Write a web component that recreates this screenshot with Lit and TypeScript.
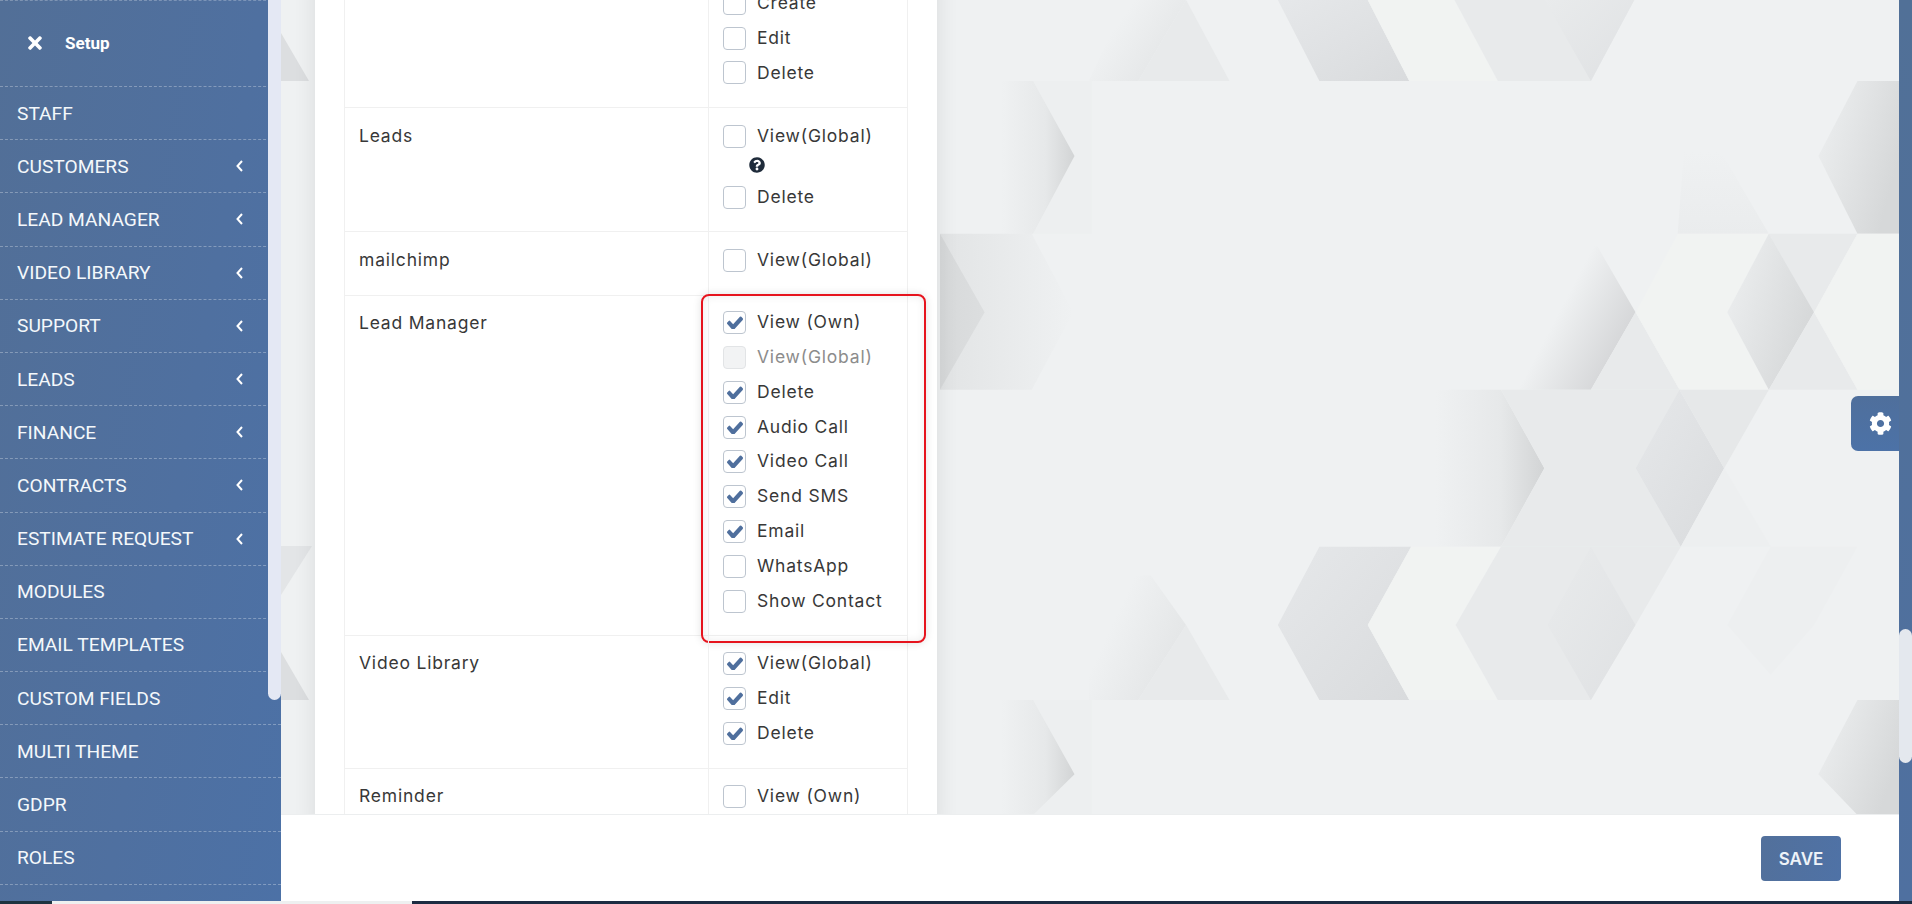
import { LitElement, html, css, svg } from "lit";
import { customElement } from "lit/decorators.js";

const CHECK = "M1671 566q0 40-28 68l-724 724-136 136q-28 28-68 28t-68-28l-136-136-362-362q-28-28-28-68t28-68l136-136q28-28 68-28t68 28l294 295 656-657q28-28 68-28t68 28l136 136q28 28 28 68z";
const TIMES = "M242.72 256l100.07-100.07c12.28-12.28 12.28-32.19 0-44.48l-22.24-22.24c-12.28-12.28-32.19-12.28-44.48 0L176 189.28 75.93 89.21c-12.28-12.28-32.19-12.28-44.48 0L9.21 111.45c-12.28 12.28-12.28 32.19 0 44.48L109.28 256 9.21 356.07c-12.28 12.28-12.28 32.19 0 44.48l22.24 22.24c12.28 12.28 32.2 12.28 44.48 0L176 322.72l100.07 100.07c12.28 12.28 32.2 12.28 44.48 0l22.24-22.24c12.28-12.28 12.28-32.19 0-44.48L242.72 256z";
const COG = "M487.4 315.7l-42.6-24.6c4.3-23.2 4.3-47 0-70.2l42.6-24.6c4.9-2.8 7.1-8.6 5.5-14-11.1-35.6-30-67.8-54.7-94.6-3.8-4.1-10-5.1-14.8-2.3L380.8 110c-17.9-15.4-38.5-27.3-60.8-35.1V25.8c0-5.6-3.9-10.5-9.4-11.7-36.7-8.2-74.3-7.8-109.2 0-5.5 1.2-9.4 6.1-9.4 11.7V75c-22.2 7.9-42.8 19.8-60.8 35.1L88.7 85.5c-4.9-2.8-11-1.9-14.8 2.3-24.7 26.7-43.6 58.9-54.7 94.6-1.7 5.4.6 11.2 5.5 14L67.3 221c-4.3 23.2-4.3 47 0 70.2l-42.6 24.6c-4.9 2.8-7.1 8.6-5.5 14 11.1 35.6 30 67.8 54.7 94.6 3.8 4.1 10 5.1 14.8 2.3l42.6-24.6c17.9 15.4 38.5 27.3 60.8 35.1v49.2c0 5.6 3.9 10.5 9.4 11.7 36.7 8.2 74.3 7.8 109.2 0 5.5-1.2 9.4-6.1 9.4-11.7v-49.2c22.2-7.9 42.8-19.8 60.8-35.1l42.6 24.6c4.9 2.8 11 1.9 14.8-2.3 24.7-26.7 43.6-58.9 54.7-94.6 1.5-5.5-.7-11.3-5.6-14.1zM256 336c-44.1 0-80-35.9-80-80s35.9-80 80-80 80 35.9 80 80-35.9 80-80 80z";
const QUESTION = "M504 256c0 136.997-111.043 248-248 248S8 392.997 8 256C8 119.083 119.043 8 256 8s248 111.083 248 248zM262.655 90c-54.497 0-89.255 22.957-116.549 63.758-3.536 5.286-2.353 12.415 2.715 16.258l34.699 26.31c5.205 3.947 12.621 3.008 16.665-2.122 17.864-22.658 30.113-35.797 57.303-35.797 20.429 0 45.698 13.148 45.698 32.958 0 14.976-12.363 22.667-32.534 33.976C247.128 238.528 216 254.941 216 296v4c0 6.627 5.373 12 12 12h56c6.627 0 12-5.373 12-12v-1.333c0-28.462 83.186-29.647 83.186-106.667 0-58.002-60.165-102-116.531-102zM256 338c-25.365 0-46 20.635-46 46 0 25.364 20.635 46 46 46s46-20.636 46-46c0-25.365-20.635-46-46-46z";

const NAV: [string, boolean][] = [
  ["STAFF", false], ["CUSTOMERS", true], ["LEAD MANAGER", true], ["VIDEO LIBRARY", true],
  ["SUPPORT", true], ["LEADS", true], ["FINANCE", true], ["CONTRACTS", true],
  ["ESTIMATE REQUEST", true], ["MODULES", false], ["EMAIL TEMPLATES", false],
  ["CUSTOM FIELDS", false], ["MULTI THEME", false], ["GDPR", false], ["ROLES", false],
];

type Item = { t: string; c?: boolean; d?: boolean; help?: boolean };
type Row = { label: string; items: Item[]; boxed?: boolean };
const ROWS: Row[] = [
  { label: "", items: [{ t: "Create" }, { t: "Edit" }, { t: "Delete" }] },
  { label: "Leads", items: [{ t: "View(Global)" }, { t: "", help: true }, { t: "Delete" }] },
  { label: "mailchimp", items: [{ t: "View(Global)" }] },
  {
    label: "Lead Manager", boxed: true,
    items: [
      { t: "View (Own)", c: true }, { t: "View(Global)", d: true }, { t: "Delete", c: true },
      { t: "Audio Call", c: true }, { t: "Video Call", c: true }, { t: "Send SMS", c: true },
      { t: "Email", c: true }, { t: "WhatsApp" }, { t: "Show Contact" },
    ],
  },
  { label: "Video Library", items: [{ t: "View(Global)", c: true }, { t: "Edit", c: true }, { t: "Delete", c: true }] },
  { label: "Reminder", items: [{ t: "View (Own)" }] },
];

// Background facets, authored in a 1547x1558 space covering x 940-1899, y 0-815.
const BASE = "#eff1f2", LIGHT = "#f1f3f2", MID = "#e8eaeb", SOFT = "#edeff0";
const FACETS: [string, string][] = [
  // row 0
  ["240,155 320,155 397,0 300,0", "url(#fr)"],
  ["320,155 467,155 397,0", MID],
  ["545,0 612,155 757,155 690,0", "url(#dk)"],
  ["690,0 757,155 900,155 830,0", LIGHT],
  ["830,0 900,155 1050,155 1120,0", MID],
  ["975,0 1050,155 1120,0", "url(#dl)"],
  // row 1
  ["150,155 245,155 245,447 150,447 217,298", SOFT],
  ["60,155 150,155 217,298 150,447 60,447", "url(#fr2)"],
  ["1480,155 1547,155 1547,447 1480,447 1417,298", "url(#fr3)"],
  ["1190,447 1337,447 1260,290 1200,290", "url(#fv)"],
  // row 2
  ["0,447 148,447 215,597 148,745 0,745", "url(#fl)"],
  ["0,447 72,597 0,745", "url(#fk)"],
  ["900,745 1050,745 1122,597 1060,470 930,470", "url(#fd)"],
  ["1122,597 1050,745 1193,745", MID],
  ["1190,447 1337,447 1270,597 1337,745 1193,745 1122,597", LIGHT],
  ["1337,447 1480,447 1410,597", MID],
  ["1337,447 1410,597 1337,745 1270,597", "url(#fr3)"],
  ["1410,597 1337,745 1480,745", MID],
  ["1480,447 1547,447 1547,745 1480,745 1410,597", LIGHT],
  // row 3
  ["740,745 905,745 975,895 905,1045 740,1045", "url(#fr2)"],
  ["905,745 1195,745 1122,895 1195,1045 905,1045 975,895", MID],
  ["1193,745 1265,895 1195,1045 1122,895", "url(#dk)"],
  ["1193,745 1337,745 1265,895", "#e6e8e9"],
  ["1265,895 1195,1045 1340,1045", SOFT],
  // row 4
  ["612,1045 760,1045 690,1195 757,1338 612,1338 545,1195", "url(#dk)"],
  ["760,1045 905,1045 832,1195 900,1338 757,1338 690,1195", LIGHT],
  ["905,1045 1195,1045 1122,1195 1050,1338 900,1338 832,1195", MID],
  ["1050,1045 1122,1195 1050,1338 980,1195", "url(#dl)"],
  ["240,1338 320,1338 397,1195 340,1100 240,1100", "url(#fr)"],
  ["320,1338 467,1338 397,1195", MID],
  ["1340,1045 1480,1045 1410,1195 1340,1290 1270,1195", SOFT],
  // row 5
  ["150,1338 245,1338 245,1558 150,1558 217,1480", SOFT],
  ["60,1338 150,1338 217,1480 150,1558 60,1558", "url(#fr2)"],
  ["1480,1338 1547,1338 1547,1558 1480,1558 1417,1480", "url(#fr3)"],
];

@customElement("app-root")
export class AppRoot extends LitElement {
  static styles = css`
    :host { display: block; width: 1912px; height: 904px; overflow: hidden; font-family: "Inter", "Noto Sans", sans-serif; }
    .app { display: grid; grid-template-columns: 281px 1fr 13px; height: 901px; }
    .taskbar { display: flex; height: 3px; background: #1d3440; }
    .taskbar i { display: block; }
    .tb-a { width: 52px; }
    .tb-b { width: 360px; background: #eef0f0; }
    .tb-c { flex: 1; background: #1c2c42; }

    .side { position: relative; overflow: hidden; background: linear-gradient(100deg, #526f97 0%, #4f70a0 60%, #4c71a6 100%); font-family: "Roboto", sans-serif; color: #fff; }
    .head { display: flex; align-items: center; padding: 0 0 2px 28px; border-top: 1px dashed rgba(255,255,255,.25); border-bottom: 1px dashed rgba(255,255,255,.3); box-sizing: border-box; height: 87px; font-weight: 700; font-size: 17px; }
    .head svg { width: 14px; height: 20px; fill: #fff; margin-right: 23px; }
    .nav { display: flex; align-items: center; justify-content: space-between; height: 53.2px; box-sizing: border-box; padding: 0 38px 0 17px; border-bottom: 1px dashed rgba(255,255,255,.3); font-size: 19.2px; font-weight: 400; color: #f4f8fb; }
    .nav svg { width: 7px; height: 12px; fill: none; stroke: #fff; stroke-width: 2; }
    .thumb { position: absolute; right: 0; top: -6px; width: 13px; height: 706px; border-radius: 7px; background: #e4e8f4; }

    .main { position: relative; display: flex; flex-direction: column; min-width: 0; background: #fff; }
    .bg { position: absolute; left: 0; top: 0; width: 1618px; height: 815px; }
    .scroller { position: relative; height: 815px; overflow: hidden; padding-left: 34px; box-sizing: border-box; flex: none; }
    .card { width: 622px; margin-top: -24.5px; background: #fff; box-shadow: 0 0 22px rgba(0,0,0,.09); padding: 0 29px; box-sizing: border-box; color: #383838; font-size: 17.5px; letter-spacing: .8px; }
    .row { display: grid; grid-template-columns: 363px 1fr; border-bottom: 1px solid #f0f0f0; border-left: 1px solid #f0f0f0; border-right: 1px solid #f0f0f0; }
    .label { padding: 10.5px 0 0 14px; line-height: 34.8px; }
    .cell { position: relative; border-left: 1px solid #f0f0f0; padding: 10.5px 0 17px 14px; }
    .cell.boxed { padding: 9.5px 0 16.5px 14px; }
    .box { position: absolute; left: -8px; top: -2px; width: 225px; height: 349px; box-sizing: border-box; border: 2px solid #e6141e; border-radius: 8px; box-shadow: 0 0 8px rgba(0,0,0,.12), inset 0 0 8px rgba(0,0,0,.08); pointer-events: none; }
    .item { display: flex; align-items: center; height: 34.8px; line-height: 34.8px; white-space: nowrap; }
    .help { height: 26px; padding: 0 0 4px 26px; box-sizing: border-box; display: flex; align-items: center; }
    .help svg { width: 16px; height: 16px; fill: #1f2b3a; }
    .cb { flex: none; width: 23px; height: 23px; box-sizing: border-box; border: 1px solid #bdc5cf; border-radius: 4px; background: #fff; margin-right: 11px; display: flex; align-items: center; justify-content: center; }
    .cb svg { width: 16px; height: 13px; fill: #4f6f9d; }
    .dis .cb { background: #f2f3f4; border-color: #e2e4e6; }
    .dis { color: #8c8c8c; }

    .foot { flex: 1; position: relative; display: flex; align-items: flex-start; justify-content: flex-end; padding: 21px 58px 0 0; background: #fff; border-top: 1px solid #eceeef; box-sizing: border-box; margin-top: -1px; }
    .save { width: 80px; height: 45px; border: 0; border-radius: 4px; background: linear-gradient(100deg, #52709b, #4f72a6); color: #eef3f8; font-family: inherit; font-size: 17px; font-weight: 600; }
    .gear { position: absolute; right: 0; top: 396px; width: 48px; height: 55px; box-sizing: border-box; padding-left: 10px; display: flex; align-items: center; justify-content: center; border-radius: 7px 0 0 7px; background: linear-gradient(180deg, #4f6f9c, #4c72a7); }
    .gear svg { width: 23px; height: 23px; fill: #fff; }

    .rail { background: linear-gradient(180deg, #517097, #4f70a0); }
    .rail div { width: 13px; height: 134px; margin-top: 629px; border-radius: 7px; background: #e4e8ee; }
  `;

  private renderItem(i: Item) {
    if (i.help) {
      return html`<div class="help"><svg viewBox="0 0 512 512"><path d=${QUESTION}></path></svg></div>`;
    }
    return html`<div class="item ${i.d ? "dis" : ""}">
      <span class="cb">${i.c ? html`<svg viewBox="121 300 1550 1120" preserveAspectRatio="none"><path d=${CHECK}></path></svg>` : ""}</span>
      <span>${i.t}</span>
    </div>`;
  }

  render() {
    return html`
      <div class="app">
        <aside class="side">
          <div class="head">
            <svg viewBox="0 0 352 512"><path d=${TIMES}></path></svg>
            <span>Setup</span>
          </div>
          ${NAV.map(([t, chev]) => html`<div class="nav"><span>${t}</span>${chev
            ? html`<svg viewBox="0 0 7 12"><polyline points="6,1 1.5,6 6,11"></polyline></svg>` : ""}</div>`)}
          <div class="thumb"></div>
        </aside>
        <main class="main">
          <svg class="bg" viewBox="281 0 1618 815" preserveAspectRatio="none">
            <defs>
              <linearGradient id="dk" x1="0" y1="0" x2="1" y2="1"><stop offset="0" stop-color="#e6e8ea"></stop><stop offset="1" stop-color="#d9dbdd"></stop></linearGradient>
              <linearGradient id="dl" x1="0" y1="0" x2="1" y2="1"><stop offset="0" stop-color="#e9ebec"></stop><stop offset="1" stop-color="#dfe1e3"></stop></linearGradient>
              <linearGradient id="fr" x1="0" y1="0" x2="1" y2=".6"><stop offset=".35" stop-color="#e3e5e6" stop-opacity="0"></stop><stop offset="1" stop-color="#e3e5e6"></stop></linearGradient>
              <linearGradient id="fr2" x1="0" y1="0" x2="1" y2="0"><stop offset=".25" stop-color="#d2d4d5" stop-opacity="0"></stop><stop offset=".7" stop-color="#d2d4d5" stop-opacity=".3"></stop><stop offset="1" stop-color="#d2d4d5"></stop></linearGradient>
              <linearGradient id="fr3" x1="0" y1="0" x2="1" y2=".5"><stop offset=".1" stop-color="#d6d8d9" stop-opacity=".12"></stop><stop offset="1" stop-color="#d6d8d9"></stop></linearGradient>
              <linearGradient id="fl" x1="0" y1="0" x2="1" y2="0"><stop offset="0" stop-color="#e2e4e5"></stop><stop offset="1" stop-color="#e2e4e5" stop-opacity="0"></stop></linearGradient>
              <linearGradient id="fk" x1="0" y1="0" x2="1" y2="0"><stop offset="0" stop-color="#d7d9da"></stop><stop offset="1" stop-color="#dcdedf"></stop></linearGradient>
              <linearGradient id="fd" x1="0" y1=".2" x2="1" y2=".75"><stop offset=".45" stop-color="#cfd0d2" stop-opacity="0"></stop><stop offset="1" stop-color="#cfd0d2"></stop></linearGradient>
              <linearGradient id="fv" x1="0" y1="0" x2="0" y2="1"><stop offset="0" stop-color="#eaeced" stop-opacity="0"></stop><stop offset="1" stop-color="#eaeced"></stop></linearGradient>
            </defs>
            <rect x="281" y="0" width="1618" height="815" fill=${BASE}></rect>
            <polygon points="281,33 309,81 281,81" fill="#dcdee0"></polygon>
            <polygon points="281,546 312,546 281,595" fill="#e3e5e7"></polygon>
            <polygon points="281,652 309,700 281,700" fill="#dcdee0"></polygon>
            <g transform="translate(940 0) scale(.6199 .5231)">
              ${FACETS.map(([p, f]) => svg`<polygon points=${p} fill=${f}></polygon>`)}
            </g>
          </svg>
          <div class="scroller">
            <div class="card">
              ${ROWS.map((r) => html`<div class="row">
                <div class="label">${r.label}</div>
                <div class="cell ${r.boxed ? "boxed" : ""}">
                  ${r.items.map((i) => this.renderItem(i))}
                  ${r.boxed ? html`<div class="box"></div>` : ""}
                </div>
              </div>`)}
            </div>
          </div>
          <div class="foot"><button class="save">SAVE</button></div>
          <div class="gear"><svg viewBox="0 0 512 512"><path d=${COG}></path></svg></div>
        </main>
        <div class="rail"><div></div></div>
      </div>
      <div class="taskbar"><i class="tb-a"></i><i class="tb-b"></i><i class="tb-c"></i></div>
    `;
  }
}
